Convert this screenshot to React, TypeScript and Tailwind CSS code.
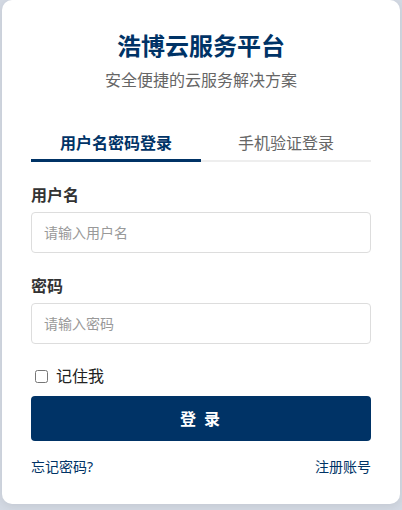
import { useState } from "react";

export default function App() {
    const [tab, setTab] = useState<"account" | "phone">("account");
    const [username, setUsername] = useState("");
    const [password, setPassword] = useState("");
    const [remember, setRemember] = useState(false);

    return (
        <div
            className="min-h-[510px] bg-[#d3d9e3] px-[2px]"
            style={{ fontFamily: '"Noto Sans", "Noto Sans CJK SC", sans-serif' }}
        >
            <div className="h-[504px] bg-white rounded-[10px] shadow-[0_2px_8px_rgba(0,0,0,0.08)] px-[29px] pt-[30px]">
                <h1 className="text-center text-[24px] leading-[32px] font-bold text-[#003366]">浩博云服务平台</h1>
                <p className="mt-[6px] text-center text-[16px] leading-[24px] text-[#666]">安全便捷的云服务解决方案</p>

                <div className="mt-[29px] flex border-b-2 border-[#eeeeee]">
                    <button
                        onClick={() => setTab("account")}
                        className={`flex-1 pt-[10px] pb-[4px] -mb-[2px] border-b-[3px] text-[16px] leading-[24px] ${
                            tab === "account" ? "border-[#003366] font-bold text-[#003366]" : "border-transparent text-[#666]"
                        }`}
                    >
                        用户名密码登录
                    </button>
                    <button
                        onClick={() => setTab("phone")}
                        className={`flex-1 pt-[10px] pb-[4px] -mb-[2px] border-b-[3px] text-[16px] leading-[24px] ${
                            tab === "phone" ? "border-[#003366] font-bold text-[#003366]" : "border-transparent text-[#666]"
                        }`}
                    >
                        手机验证登录
                    </button>
                </div>

                <form onSubmit={e => e.preventDefault()} className="mt-[21px]">
                    <label className="block text-[16px] leading-[24px] font-bold text-[#333]">用户名</label>
                    <input
                        type="text"
                        value={username}
                        onChange={e => setUsername(e.target.value)}
                        placeholder="请输入用户名"
                        className="mt-[5px] block w-full h-[41px] px-[12px] border border-[#dddddd] rounded-[4px] text-[14px] text-[#333] placeholder:text-[#999] focus:outline-none"
                    />

                    <label className="mt-[21px] block text-[16px] leading-[24px] font-bold text-[#333]">密码</label>
                    <input
                        type="password"
                        value={password}
                        onChange={e => setPassword(e.target.value)}
                        placeholder="请输入密码"
                        className="mt-[5px] block w-full h-[41px] px-[12px] border border-[#dddddd] rounded-[4px] text-[14px] text-[#333] placeholder:text-[#999] focus:outline-none"
                    />

                    <label className="mt-[20px] flex items-center h-[24px] text-[16px] text-[#222]">
                        <input
                            type="checkbox"
                            checked={remember}
                            onChange={e => setRemember(e.target.checked)}
                            className="ml-[4px] w-[13px] h-[13px]"
                        />
                        <span className="ml-[8px]">记住我</span>
                    </label>

                    <button
                        type="submit"
                        className="mt-[8px] w-full h-[45px] bg-[#003366] rounded-[4px] text-white text-[16px] font-bold tracking-[2px]"
                    >
                        登 录
                    </button>

                    <div className="mt-[16px] flex justify-between text-[14px] leading-[20px] text-[#003366]">
                        <a href="#">忘记密码?</a>
                        <a href="#">注册账号</a>
                    </div>
                </form>
            </div>
        </div>
    );
}
